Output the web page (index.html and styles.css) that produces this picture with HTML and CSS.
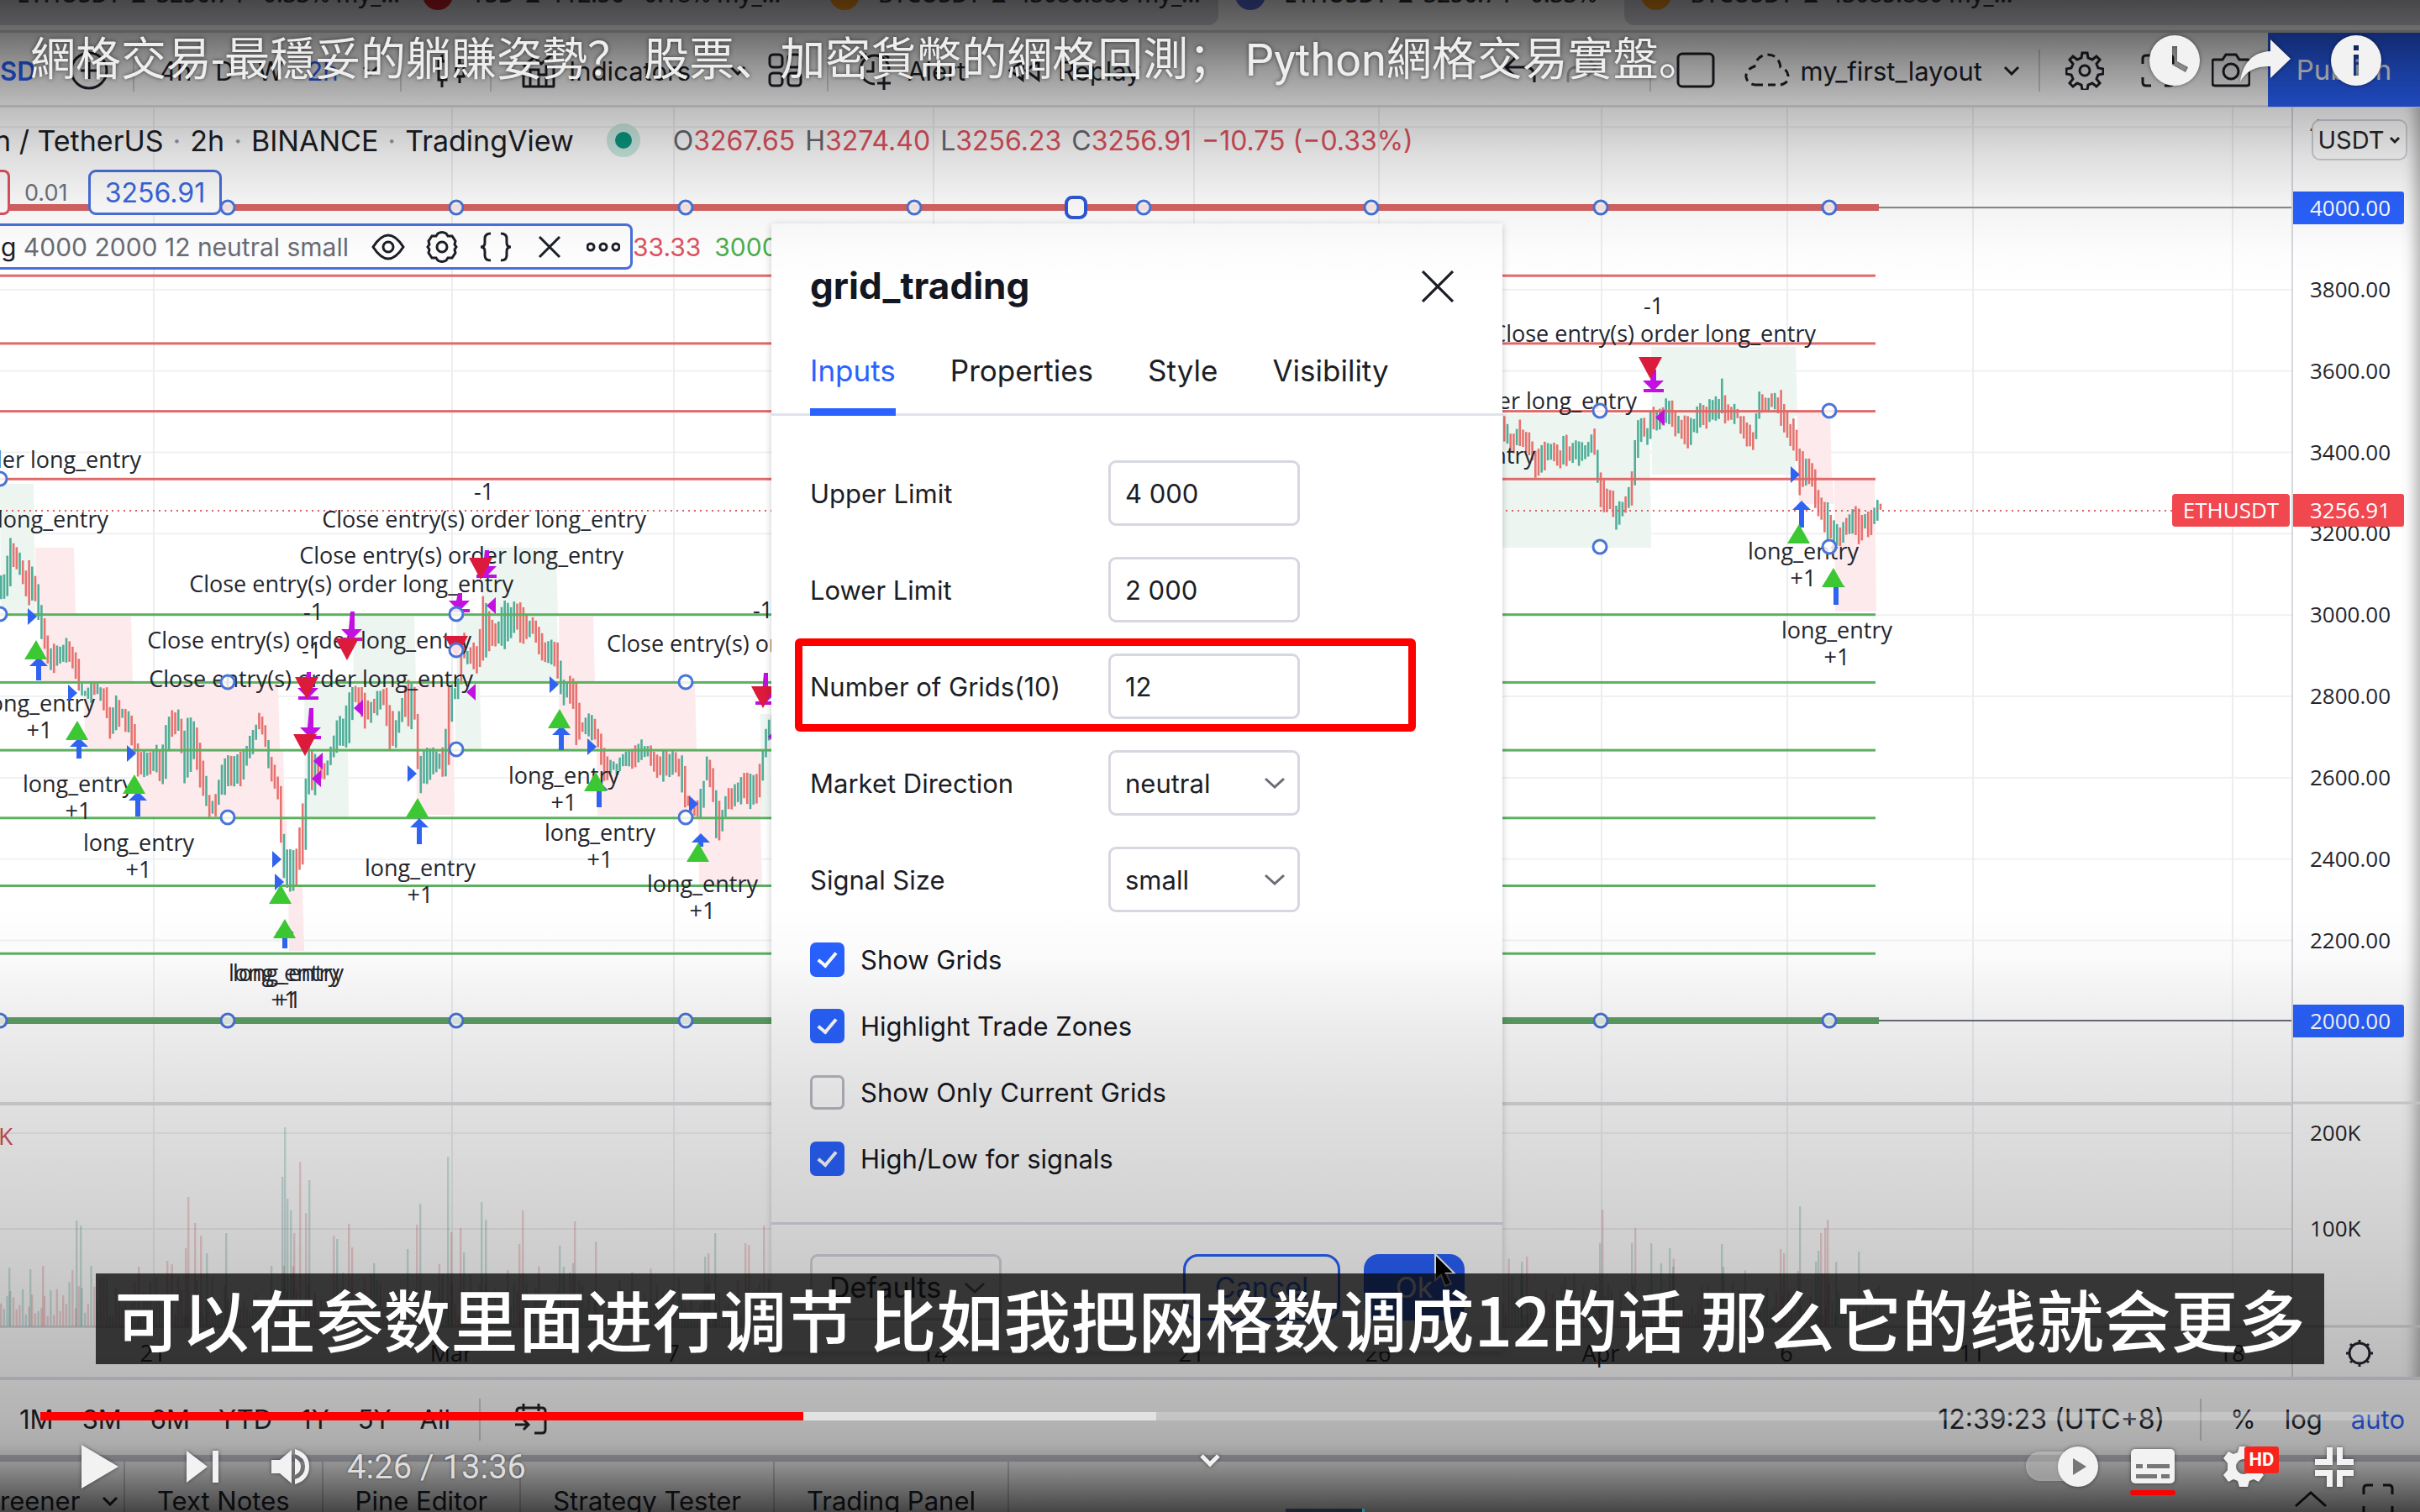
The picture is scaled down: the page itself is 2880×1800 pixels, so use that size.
FILE: index.html
```html
<!DOCTYPE html>
<html lang="zh-Hant">
<head>
<meta charset="utf-8">
<title>網格交易</title>
<link rel="stylesheet" href="styles.css">
</head>
<body>
<main class="player">
  <section class="app" lang="en">
    <div class="tabstrip">
      <div class="btab btab-dim"><span>ETHUSDT ▲ 3256.74 −0.33% my_…</span></div>
      <div class="btab btab-dim"><i class="fav red"></i><span>TSD ▲ 112.56 −0.18% my_…</span></div>
      <div class="btab btab-dim last"><i class="fav orange"></i><span>BTCUSDT ▲ 43086.880 my_…</span></div>
      <div class="btab"><i class="fav blue"></i><span>ETHUSDT ▲ 3256.74 −0.33%</span></div>
      <div class="btab btab-dim first"><i class="fav orange"></i><span>BTCUSDT ▲ 43085.880 my_…</span></div>
    </div>
    <header class="toolbar">
      <div class="tg g1"><b class="sym">SD</b><svg class="ic" viewBox="0 0 46 46"><circle cx="23" cy="23" r="21"/><path d="M23 13v20M13 23h20"/></svg></div>
      <div class="tg g2"><span>4h</span><span>D</span><span>W</span><span class="on">2h</span><svg class="chev" viewBox="0 0 20 12"><path d="M2 2l8 8 8-8"/></svg></div>
      <div class="tg g3"><svg class="ic" viewBox="0 0 46 46"><path d="M8 12h9v22H8zM12 4v8M12 34v9M29 16h9v14h-9zM33 8v8M33 30v8"/></svg></div>
      <div class="tg g4"><svg class="ic" viewBox="0 0 46 46"><path d="M4 42V28h8v14M12 42V22h10v20M22 42V28h9v14M31 42V18h9v24M3 42h38M4 18l13-11 8 8 14-12"/></svg><span>Indicators</span><svg class="chev" viewBox="0 0 20 12"><path d="M2 2l8 8 8-8"/></svg><svg class="ic lay" viewBox="0 0 46 46"><rect x="4" y="4" width="15" height="15" rx="4"/><rect x="26" y="4" width="15" height="15" rx="4"/><rect x="4" y="26" width="15" height="15" rx="4"/><rect x="26" y="26" width="15" height="15" rx="4"/></svg></div>
      <div class="tg g5"><svg class="ic" viewBox="0 0 46 46"><path d="M6 8l7-5M33 3l7 5M23 39a17 17 0 1 1 17-17M21 12v12h-8M34 30v16M26 38h16"/></svg><span>Alert</span><svg class="ic rep" viewBox="0 0 46 46"><path d="M20 12L5 23l15 11zM39 12L24 23l15 11z"/></svg><span>Replay</span></div>
      <div class="tg g6"><svg class="ic" viewBox="0 0 46 46"><path d="M16 8L5 19l11 11M5 19h24q10 0 10 12v6"/></svg><svg class="ic dim" viewBox="0 0 46 46"><path d="M30 8l11 11-11 11M41 19H17Q7 19 7 31v6"/></svg></div>
      <div class="tg g7"><svg class="ic" viewBox="0 0 46 46"><rect x="2" y="3" width="42" height="39" rx="5"/></svg><svg class="ic cloud" viewBox="0 0 56 46"><path stroke-dasharray="9 6" d="M14 40h30q10-2 9-11-1-8-9-10Q42 4 28 4 16 5 13 18 2 22 3 31q2 8 11 9z"/></svg><span>my_first_layout</span><svg class="chev" viewBox="0 0 20 12"><path d="M2 2l8 8 8-8"/></svg></div>
      <div class="tg g8"><svg class="ic" viewBox="0 0 46 46"><path d="M20 2h6l1 6 5 2 5-4 4 4-4 5 2 5 6 1v6l-6 1-2 5 4 5-4 4-5-4-5 2-1 6h-6l-1-6-5-2-5 4-4-4 4-5-2-5-6-1v-6l6-1 2-5-4-5 4-4 5 4 5-2z"/><circle cx="23" cy="23" r="6"/></svg><svg class="ic" viewBox="0 0 46 46"><path d="M5 15V9q0-4 4-4h6M31 5h6q4 0 4 4v6M41 31v6q0 4-4 4h-6M15 41H9q-4 0-4-4v-6"/></svg><svg class="ic" viewBox="0 0 46 46"><path d="M3 10h10l4-6h12l4 6h10q2 0 2 3v25q0 3-3 3H4q-3 0-3-3V12q0-2 2-2z"/><circle cx="23" cy="24" r="9"/></svg></div>
      <button class="publish">Publish</button>
    </header>
    <div class="workspace">
      <div class="pane">
        <svg id="chart" class="chart" role="img" aria-label="ETHUSDT chart"></svg>
        <div class="legend">
          <div class="l1"><span>n / TetherUS</span><i>·</i><span>2h</span><i>·</i><span>BINANCE</span><i>·</i><span>TradingView</span><em class="live"></em>
            <span class="ohlc"><span>O<b>3267.65</b></span><span>H<b>3274.40</b></span><span>L<b>3256.23</b></span><span>C<b>3256.91</b></span><b>−10.75 (−0.33%)</b></span></div>
          <div class="l2"><button class="sell"></button><span class="spread">0.01</span><button class="buy">3256.91</button></div>
          <div class="l3"><div class="study"><span>g <i>4000 2000 12 neutral small</i></span>
            <svg viewBox="0 0 40 40"><path d="M2 20q18-28 36 0-18 28-36 0z"/><circle cx="20" cy="20" r="6"/></svg>
            <svg viewBox="0 0 40 40"><path d="M15 4q5-3 10 0l2 3h5l4 6-1 4 2 3-2 3 1 4-4 6h-5l-2 3q-5 3-10 0l-2-3H8l-4-6 1-4-2-3 2-3-1-4 4-6h5z"/><circle cx="20" cy="20" r="6"/></svg>
            <svg viewBox="0 0 40 40"><path d="M14 4q-7 0-7 6v5q0 5-5 5 5 0 5 5v5q0 6 7 6M26 4q7 0 7 6v5q0 5 5 5-5 0-5 5v5q0 6-7 6"/></svg>
            <svg viewBox="0 0 40 40"><path d="M8 8l24 24M32 8L8 32"/></svg>
            <svg viewBox="0 0 40 40"><circle cx="5" cy="20" r="4"/><circle cx="20" cy="20" r="4"/><circle cx="35" cy="20" r="4"/></svg>
          </div><b class="r">33.33</b><b class="g">3000.00</b></div>
        </div>
      </div>
      <div class="scale"><svg id="scale" class="chart"></svg><button class="usdt">USDT<svg viewBox="0 0 14 10"><path d="M2 2l5 5 5-5"/></svg></button></div>
    </div>
    <div class="ranges">
      <a href="#">1M</a><a href="#">3M</a><a href="#">6M</a><a href="#">YTD</a><a href="#">1Y</a><a href="#">5Y</a><a href="#">All</a><s></s>
      <svg class="cal" viewBox="0 0 40 40"><path d="M3 16V10q0-4 4-4h26q4 0 4 4v22q0 4-4 4h-9M3 14h34M11 1v9M29 1v9M1 26h16M11 20l6 6-6 6"/></svg>
      <span class="clock">12:39:23 (UTC+8)</span><s></s><a href="#" class="pct">%</a><a href="#">log</a><a href="#" class="on">auto</a>
    </div>
    <nav class="bottabs">
      <a href="#">reener <svg class="chev" viewBox="0 0 20 12"><path d="M2 2l8 8 8-8"/></svg></a><a href="#">Text Notes</a><a href="#">Pine Editor</a><a href="#">Strategy Tester</a><a href="#">Trading Panel</a>
      <span class="endicons"><svg viewBox="0 0 40 40"><path d="M2 28l18-16 18 16"/></svg><svg viewBox="0 0 40 40"><path d="M3 14V7q0-4 4-4h7M26 3h7q4 0 4 4v7M37 28v7M3 28v7"/></svg></span>
    </nav>
  </section>

  <form class="dialog" lang="en">
    <div class="dhead"><h1>grid_trading</h1><button type="button" class="x" aria-label="Close"><svg viewBox="0 0 36 36"><path d="M1 1l34 34M35 1L1 35"/></svg></button></div>
    <nav class="dtabs"><a href="#" class="on">Inputs</a><a href="#">Properties</a><a href="#">Style</a><a href="#">Visibility</a></nav>
    <div class="fields">
      <label for="u">Upper Limit</label><input id="u" value="4 000">
      <label for="l">Lower Limit</label><input id="l" value="2 000">
      <label for="n">Number of Grids(10)</label><input id="n" value="12">
      <label for="m">Market Direction</label><div class="sel"><select id="m"><option>neutral</option></select><svg viewBox="0 0 26 16"><path d="M2 3l11 10L24 3"/></svg></div>
      <label for="s">Signal Size</label><div class="sel"><select id="s"><option>small</option></select><svg viewBox="0 0 26 16"><path d="M2 3l11 10L24 3"/></svg></div>
    </div>
    <div class="checks">
      <label><input type="checkbox" checked>Show Grids</label>
      <label><input type="checkbox" checked>Highlight Trade Zones</label>
      <label><input type="checkbox">Show Only Current Grids</label>
      <label><input type="checkbox" checked>High/Low for signals</label>
    </div>
    <div class="dfoot"><button type="button" class="def">Defaults<svg viewBox="0 0 26 16"><path d="M2 3l11 10L24 3"/></svg></button><button type="button" class="cancel">Cancel</button><button type="button" class="ok">Ok</button></div>
    <div class="mark"></div>
    <svg class="cursor" viewBox="0 0 28 42"><path d="M2 1v31l7-6 5 13 7-3-6-12h10z"/></svg>
  </form>

  <div class="shade"></div>
  <div class="thumb"></div>

  <div class="ptitle"><h2 lang="zh-Hans">網格交易-最穩妥的躺賺姿勢？ 股票、加密貨幣的網格回測； Python網格交易實盤。</h2>
    <div class="picons">
      <button aria-label="Watch later"><svg viewBox="0 0 66 66"><path fill-rule="evenodd" d="M33 3a30 30 0 1 0 0 60 30 30 0 1 0 0-60zm-3 13h6v18l13 7-3 6-16-9z"/></svg></button>
      <button aria-label="Share"><svg viewBox="0 0 66 66"><path d="M39 8v14C17 23 6 37 3 58c9-14 19-18 36-18v14l24-23z"/></svg></button>
      <button aria-label="Info"><svg viewBox="0 0 66 66"><path fill-rule="evenodd" d="M33 3a30 30 0 1 0 0 60 30 30 0 1 0 0-60zm-3 12h6v6h-6zm0 11h6v25h-6z"/></svg></button>
    </div>
  </div>

  <div class="controls">
    <p class="caption" lang="zh-Hans">可以在参数里面进行调节 比如我把网格数调成12的话 那么它的线就会更多</p>
    <div class="progress"><div class="loaded"></div><div class="played"></div></div>
    <div class="bar">
      <div class="left">
        <button aria-label="Play"><svg viewBox="0 0 72 72"><path d="M15 10l44 26-44 26z"/></svg></button>
        <button aria-label="Next"><svg viewBox="0 0 72 72"><path d="M17 17l25 19-25 19zM48 17h7v38h-7z"/></svg></button>
        <button aria-label="Mute"><svg viewBox="0 0 72 72"><path d="M14 28v16h10l14 12V16L24 28zM42 26v20q7-3 7-10t-7-10zM42 15v6q12 4 12 15T42 51v6q17-5 17-21T42 15z"/></svg></button>
        <span class="time">4:26 / 13:36</span>
      </div>
      <svg class="more" viewBox="0 0 26 18"><path d="M3 3l10 10L23 3"/></svg>
      <div class="right">
        <button aria-label="Autoplay"><svg class="wide" viewBox="0 0 90 72"><rect x="3" y="18" width="70" height="35" rx="17" opacity=".4"/><circle cx="65" cy="36" r="24"/><path d="M59 26l16 10-16 10z" class="hole"/></svg></button>
        <button aria-label="Captions" class="cc"><svg viewBox="0 0 72 72"><rect x="10" y="15" width="52" height="41" rx="5"/><path class="hole" d="M16 33h8v5h-8zM29 33h27v5H29zM16 45h25v5H16zM46 45h10v5H46z"/></svg></button>
        <button aria-label="Settings" class="set"><svg viewBox="0 0 72 72"><path fill-rule="evenodd" d="M31 12h10l2 7 5 2 6-3 6 8-5 6v8l5 6-6 8-6-3-5 2-2 7H31l-2-7-5-2-6 3-6-8 5-6v-8l-5-6 6-8 6 3 5-2zm5 15a9 9 0 1 0 0 18 9 9 0 1 0 0-18z"/></svg><span>HD</span></button>
        <button aria-label="Exit full screen"><svg viewBox="0 0 72 72"><path d="M27 13h7v21H13v-7h14zM39 13h7v14h13v7H39zM13 40h21v20h-7V47H13zM39 40h20v7H46v13h-7z"/></svg></button>
      </div>
    </div>
  </div>
</main>
<script src="chart.js"></script>
</body>
</html>
```
FILE: styles.css
```css
*{box-sizing:border-box}
body{margin:0;font-family:Inter,"Liberation Sans",sans-serif;color:#1c1e26;background:#fff}
button{font:inherit;color:inherit;border:0;background:none;padding:0}
a{color:inherit;text-decoration:none}
h1,h2,p{margin:0}
svg{fill:none;stroke:currentColor;stroke-width:3;display:block;flex:none}
.player{position:relative;height:100vh;min-height:1680px;overflow:hidden}
.app{display:flex;flex-direction:column;height:100%}

.tabstrip{height:39px;flex:none;display:flex;background:#fff;border-bottom:3px solid #d5d5d5;overflow:hidden}
.btab{flex:1;height:30px;display:flex;gap:22px;font:500 28px/30px "Noto Sans",sans-serif;padding-left:20px;white-space:nowrap;overflow:hidden;color:#333}
.btab-dim{background:#d8d8e0}
.btab span{margin-top:-23px}
.btab.last{border-radius:0 0 12px 0}
.btab.first{border-radius:0 0 0 12px;flex:2}
.fav{width:36px;height:36px;border-radius:50%;margin-top:-24px;flex:none}
.fav.red{background:#c81e28}.fav.orange{background:#f7931a}.fav.blue{background:#5a6ee0}

.toolbar{height:89px;flex:none;display:flex;align-items:center;font-size:31px;color:#20222a;border-bottom:3px solid #e0e3eb;padding-top:4px}
.tg{display:flex;align-items:center;height:50px;border-right:2px solid #d4d6de}
.ic{width:46px;height:46px}
.chev{width:20px;height:12px}
.dim{opacity:.35}
.on{color:#2962ff}
.sym{color:#2962ff;font-weight:600;margin-right:40px}
.g1{width:160px}
.g2{width:318px;padding-left:30px;gap:28px}
.g3{width:107px;padding-left:36px}
.g4{width:401px;padding-left:34px;gap:12px}
.g4 .chev{margin-left:34px}
.lay{margin-left:12px}
.g5{border:0;padding-left:32px;gap:16px}
.rep{margin-left:32px}
.g6{margin-left:auto;padding-right:58px;gap:26px}
.g7{padding-left:30px;gap:12px}
.g7 .cloud{width:56px;margin-left:22px}
.g7 .chev{margin:0 22px 0 13px}
.g8{border:0;padding:0 21px 0 30px;gap:41px}
.publish{width:181px;height:88px;margin-top:-4px;background:#2962ff;color:#fff;font-size:33px;align-self:flex-start}

.workspace{flex:1;display:grid;grid-template-columns:1fr 153px;min-height:0;border-bottom:4px solid #e0e3eb}
.pane,.scale{position:relative;overflow:hidden}
.scale{border-left:2px solid #d6d8e0;box-shadow:inset -20px 0 16px -14px rgba(0,0,0,.3)}
.chart{position:absolute;inset:0;width:100%;height:100%}
.chart text{stroke:none;fill:#24262e;font:26px "Open Sans",sans-serif}
.chart .order{font-size:27px}
.usdt{position:absolute;left:22px;top:14px;width:114px;height:49px;border:2px solid #d0d2da;border-radius:10px;background:#fff;font-size:29px;display:flex;align-items:center;justify-content:center;gap:6px;color:#24262e}
.usdt svg{width:14px;height:10px}

.legend{position:relative;display:flex;flex-direction:column}
.legend b,.legend i,.legend em{font-weight:400;font-style:normal}
.l1{height:74px;display:flex;align-items:center;font-size:34px;white-space:nowrap;gap:11px;padding-top:4px;margin-left:-7px}
.l1 i{color:#9a9ca4}
.live{width:40px;height:40px;border-radius:50%;border:10px solid #cdebe3;background:#089981;margin:0 28px}
.ohlc{font-size:32px;color:#666872;display:flex;gap:12px}
.ohlc b{color:#e0525e}
.l2{height:54px;display:flex;align-items:center;gap:17px}
.sell{width:12px;height:54px;border:3px solid #e0525e;border-left:0;border-radius:0 8px 8px 0;background:#fff}
.spread{font-size:27px;color:#72747e;width:59px}
.buy{width:159px;height:54px;border:3px solid #4a70dc;border-radius:9px;background:#fff;color:#3a66e0;font-size:32px}
.l3{display:flex;align-items:center;margin-top:10px;font-size:30px}
.study{display:flex;align-items:center;width:753px;height:55px;border:3px solid #4a70dc;border-left:0;border-radius:0 8px 8px 0;background:#fff;gap:24px;padding-left:1px}
.study svg{width:40px;height:40px;stroke-width:3}
.study span{width:417px;white-space:nowrap}
.study i{color:#6a6c76}
.r{color:#e0525e}.g{color:#4caf50;margin-left:16px}

.ranges{flex:none;display:flex;align-items:center;gap:34px;padding:4px 18px 0 23px;font-size:31px;color:#22242c;border-bottom:8px solid #c9c9d4;height:97px}
.ranges s{width:2px;height:50px;background:#d0d2da}
.cal{width:40px;height:40px;margin-left:6px}
.clock{margin:0 8px 0 auto;font-size:32px}
.bottabs{height:60px;flex:none;display:flex;font-size:31px;line-height:44px;color:#20222a;overflow:hidden}
.bottabs a{padding:25px 38px 0;border-right:2px solid #d0d2da;display:flex;gap:26px;white-space:nowrap}
.bottabs a:first-child{padding:25px 14px 0 0;width:149px}
.bottabs .chev{margin-top:16px}
.endicons{margin-left:auto;display:flex;gap:40px;padding:25px 30px 0 0}
.endicons svg{width:40px;height:40px}

.dialog{position:absolute;left:50%;top:266px;width:870px;margin-left:-522px;height:1343px;background:#fff;box-shadow:0 2px 8px rgba(0,0,0,.22);color:#1c1e26}
.dhead{display:flex;justify-content:space-between;align-items:center;height:150px;padding:0 58px 0 46px}
h1{font-size:44px;line-height:52px;padding-bottom:2px;font-weight:700;color:#131722}
.x svg{width:38px;height:38px}
.dtabs{display:flex;gap:65px;padding-left:46px;border-bottom:3px solid #e0e3eb;font-size:35px;line-height:50px}
.dtabs a{height:79px;margin-bottom:-3px}
.dtabs .on{border-bottom:9px solid #2962ff}
.fields{display:grid;grid-template-columns:355px 228px;row-gap:37px;align-items:center;padding:53px 46px 0;font-size:31px}
.fields input,.fields select{font:31px Inter,sans-serif;color:#1c1e26;width:228px;height:78px;border:3px solid #d6d8e0;border-radius:9px;background:#fff;padding:0 17px;appearance:none;display:block}
.sel{display:grid}
.sel>*{grid-area:1/1}
.sel svg,.def svg{width:26px;height:16px;color:#6a6c76}
.sel svg{place-self:center end;margin-right:17px;pointer-events:none}
.checks{display:flex;flex-direction:column;gap:38px;padding:36px 46px 55px;font-size:31px;color:#17181e}
.checks label{display:flex;align-items:center;gap:19px;height:41px}
.checks input{appearance:none;width:41px;height:41px;margin:0;border:3px solid #b8bac2;border-radius:7px;display:grid;place-items:center}
.checks input:checked{background:#2962ff;border-color:#2962ff}
.checks input:checked::after{content:"";width:9px;height:18px;border:solid #fff;border-width:0 4px 4px 0;rotate:40deg;margin-top:-5px}
.dfoot{display:flex;gap:28px;border-top:3px solid #dcdce6;padding:35px 45px 0 46px;font-size:34px}
.dfoot button{height:79px;border-radius:18px}
.dfoot .def{width:228px;border:3px solid #d6d8e0;border-radius:9px;display:flex;align-items:center;justify-content:space-between;padding:0 16px 0 20px;margin-right:auto}
.dfoot .cancel{width:187px;border:3px solid #2962ff;color:#2962ff}
.dfoot .ok{width:120px;background:#2962ff;color:#fff}
.mark{position:absolute;left:28px;top:494px;width:739px;height:111px;border:9px solid #f00;border-radius:6px}
.cursor{position:absolute;right:54px;top:1226px;width:28px;height:42px;fill:#000;stroke:#fff;stroke-width:2}

.shade{position:absolute;inset:0;pointer-events:none;background:
 linear-gradient(rgba(0,0,0,.67) 0,rgba(0,0,0,.57) 38px,rgba(0,0,0,.40) 82px,rgba(0,0,0,.26) 127px,rgba(0,0,0,.13) 185px,rgba(0,0,0,.05) 240px,rgba(0,0,0,.01) 300px,transparent 340px),
 linear-gradient(to top,rgba(0,0,0,.73) 0,rgba(0,0,0,.44) 56px,rgba(0,0,0,.33) 80px,rgba(0,0,0,.295) 110px,rgba(0,0,0,.27) 160px,rgba(0,0,0,.24) 221px,rgba(0,0,0,.19) 320px,rgba(0,0,0,.12) 487px,rgba(0,0,0,.07) 585px,rgba(0,0,0,.02) 660px,transparent 720px)}
.thumb{position:absolute;left:50%;bottom:0;margin-left:90px;width:94px;height:4px;background:#1c2430;border-right:3px solid #1c8a94}

.ptitle{position:absolute;inset:0 0 auto;display:flex;justify-content:space-between;align-items:flex-start;padding:32px 43px 0 36px;color:#eee}
h2{font:400 54px/80px Roboto,"Noto Sans CJK SC",sans-serif;text-shadow:0 0 5px rgba(0,0,0,.6);white-space:nowrap}
.picons{display:flex;gap:42px;padding-top:7px}
.picons svg,.bar button svg,.more{fill:#f2f2f2;stroke:none;filter:drop-shadow(0 0 2px rgba(0,0,0,.5))}
.picons svg{width:66px;height:66px}
.controls{position:absolute;inset:auto 0 0;display:flex;flex-direction:column}
.caption{align-self:center;background:rgba(8,8,8,.76);color:#fff;font:500 80px/104px "Noto Sans CJK SC",sans-serif;padding:0 22px 4px;white-space:nowrap;margin-bottom:57px}
.progress{height:10px;margin:0 48px;background:rgba(255,255,255,.22);display:grid}
.progress div{grid-area:1/1}
.loaded{width:47.7%;background:rgba(255,255,255,.5)}
.played{width:32.6%;background:#f00}
.bar{height:109px;display:grid;grid-template-columns:1fr auto 1fr;align-items:start;padding:19px 66px 0 82px}
.bar button{position:relative}
.bar button svg{width:72px;height:72px}
.left{display:flex;align-items:center}
.left button+button{margin-left:51px}
.left button+button+button{margin-left:32px}
.time{font:40px Roboto,sans-serif;color:#ddd;margin-left:32px;text-shadow:0 0 3px rgba(0,0,0,.5)}
.bar .more{width:26px;height:18px;margin:20px 16px 0 0;stroke:#f2f2f2;stroke-width:5;fill:none}
.right{display:flex;justify-content:flex-end;gap:36px}
.bar .right .wide{width:90px}
.right button:first-child{margin-right:-8px}
.hole{fill:#777}
.cc::after{content:"";position:absolute;left:9px;right:9px;top:64px;height:6px;border-radius:3px;background:#f00}
.set span{position:absolute;left:37px;top:12px;width:41px;height:32px;border-radius:3px;background:#f8241c;color:#fff;font:700 22px/32px Roboto,sans-serif}
```
FILE: chart.js
```js
const NS = "http://www.w3.org/2000/svg", TOP = 128;
const svg = document.getElementById("chart"), scale = document.getElementById("scale");
const root = document.createElementNS(NS, "g");
root.setAttribute("transform", `translate(0,-${TOP})`);
svg.append(root);
function add(tag, attrs, text, parent) {
  const e = document.createElementNS(NS, tag);
  for (const k in attrs) e.setAttribute(k, attrs[k]);
  if (text) e.textContent = text;
  (parent || root).append(e);
  return e;
}
let seed = 7;
const rnd = () => (seed = (seed * 16807) % 2147483647) / 2147483647;
const GREEN = "#50ae98", RED = "#e6736f";
const box = (x, y, w, h, fill, extra) => add("rect", { x, y, width: w, height: h, fill, stroke: "none", ...extra });
const priceY = p => 247 + (4000 - p) * 0.4842;

// background grid
for (let p = 4200; p > 2000; p -= 200) box(0, priceY(p), "100%", 2, "#f0f1f3");
for (const y of [1348, 1462]) box(0, y, "100%", 2, "rgba(0,0,0,.06)");
for (const x of [182, 537, 801, 1110, 1420, 1640, 1905, 2126, 2347, 2656]) box(x, TOP, 2, 1451, "#eceef1");
box(0, 1312, "100%", 4, "#dcdde2");
box(0, 1578, "100%", 3, "#dcdde2");

// trade zones: x1, y1, x2, y2
const P = "#fdeaec", G = "#ecf5f0";
[[0,576,42,731,G],[42,652,90,731,P],[48,734,158,812,P],[100,812,333,892,P],[165,892,339,972,P],[343,1054,362,1132,P],
 [334,972,343,1054,P],[362,812,415,972,G],[413,812,495,892,G],[420,734,495,812,G],[495,812,541,970,P],[541,812,573,892,G],
 [543,734,665,812,G],[573,652,664,734,G],[665,734,708,812,P],[665,812,829,892,P],[710,892,907,971,P],[831,971,907,1054,P],[905,850,918,971,G],
 [1787,493,1965,652,G],[1965,493,2137,565,G],[1965,413,2139,495,G],[2139,491,2180,570,P],[2183,570,2233,728,P],[2140,570,2183,600,P]]
  .forEach(([a, b, c, d, f]) => add("path", { d: `M${a} ${b}H${c - 2}L${c} ${d}H${a + 1}Z`, fill: f, stroke: "none" }));

// candles: x, high, low control points
const left = [0,692,706,5,688,708,10,642,700,14,646,675,20,655,672,25,665,694,30,680,706,34,667,715,40,690,712,43,690,730,50,735,765,54,752,780,58,772,800,65,770,795,72,776,786,80,760,780,86,775,795,91,777,815,96,818,826,103,826,830,110,814,828,118,818,826,125,820,850,130,852,878,138,830,860,144,847,856,151,845,870,158,860,890,163,893,920,170,900,918,178,895,915,184,890,910,190,900,935,197,860,920,202,850,870,212,850,865,218,870,930,223,855,925,230,860,900,236,885,930,243,925,950,250,955,972,257,945,965,265,905,940,275,905,932,285,900,930,292,895,912,298,875,900,307,853,870,314,860,880,320,895,920,330,930,950,334,940,1015,338,1018,1050,344,1010,1060,350,1020,1050,357,980,1030,363,925,1005,367,885,925,372,900,950,380,905,925,387,910,930,393,890,910,400,855,890,405,860,880,410,850,890,415,820,880,420,818,835,425,820,840,432,825,862,440,840,855,448,825,845,455,820,832,460,820,875,464,850,890,472,860,880,480,820,850,486,815,870,492,820,850,495,840,900,499,900,940,505,890,930,513,895,925,520,900,915,528,895,920,532,820,915,538,822,830,543,820,830,547,790,815,550,750,780,555,780,784,562,765,790,568,770,800,573,715,780,579,720,780,585,745,770,592,740,760,598,716,770,606,725,755,614,718,745,620,720,770,626,740,758,632,738,750,640,750,780,650,770,790,658,765,785,664,765,810,668,812,832,675,810,832,680,808,830,684,812,882,692,860,870,700,850,872,706,855,875,712,875,890,718,890,930,725,910,920,733,910,916,742,900,910,752,893,908,760,886,905,770,890,900,778,898,915,785,900,925,792,898,920,800,900,918,808,905,920,813,905,955,818,950,960,830,955,975,836,930,960,840,903,925,846,910,935,850,940,1000,857,970,990,864,940,965,870,945,965,876,935,955,884,920,950,892,925,960,900,920,950,905,910,935,909,870,910,914,860,875,918,852,870];
const right = [1789,500,520,1797,525,530,1802,515,535,1807,502,525,1811,515,533,1817,520,540,1822,525,540,1826,540,565,1831,540,568,1838,530,550,1847,530,545,1855,540,560,1862,516,550,1868,535,550,1876,528,548,1885,530,542,1892,522,536,1897,515,540,1903,560,600,1909,582,603,1917,585,605,1922,605,628,1930,600,615,1936,585,600,1942,555,600,1946,510,560,1952,500,520,1960,510,523,1964,480,515,1969,492,510,1977,487,505,1986,475,505,1992,490,515,2000,500,520,2008,500,530,2014,500,515,2021,485,505,2029,485,503,2038,478,500,2045,475,497,2049,450,490,2053,480,503,2060,485,500,2066,485,498,2072,500,515,2079,505,530,2084,520,535,2089,490,515,2093,467,490,2100,475,486,2108,472,485,2116,475,487,2119,463,505,2124,495,518,2130,505,528,2136,505,540,2140,535,590,2148,550,570,2155,555,570,2159,560,600,2163,585,610,2168,600,625,2174,605,635,2180,620,640,2187,632,647,2194,620,637,2200,618,630,2206,602,635,2211,612,650,2217,618,630,2223,615,633,2229,605,625,2233,598,612,2237,600,607];
for (const s of [left, right]) {
  let i = 0;
  for (let x = s[0]; x < s[s.length - 3]; x += 3.7) {
    while (s[i + 3] < x) i += 3;
    const t = (x - s[i]) / (s[i + 3] - s[i]);
    const hi = s[i + 1] + (s[i + 4] - s[i + 1]) * t, lo = s[i + 2] + (s[i + 5] - s[i + 2]) * t;
    const falling = s[i + 4] + s[i + 5] > s[i + 1] + s[i + 2];
    const y = hi + rnd() * 8 - 7;
    box(x, y, 2.6, Math.max(6, lo - y + rnd() * 10 - 2), rnd() < .78 ? (falling ? RED : GREEN) : (falling ? GREEN : RED));
  }
}

// volume
const vols = {10:1509,35:1511,50:1507,90:1453,95:1459,164:1508,198:1501,223:1425,220:1486,231:1456,238:1471,245:1492,268:1468,335:1401,338:1342,341:1427,345:1441,349:1468,356:1383,363:1444,367:1405,396:1471,400:1475,414:1457,418:1485,484:1487,495:1458,499:1433,532:1377,536:1467,547:1462,551:1491,572:1431,577:1452,617:1481,621:1441,665:1483,683:1454,708:1478,838:1496,842:1492,850:1468,886:1480,890:1482,908:1459,
 1810:1502,1816:1496,1903:1480,1906:1440,1941:1480,1945:1462,1964:1480,1986:1486,1990:1508,2048:1481,2118:1487,2122:1492,2141:1436,2160:1502,2163:1489,2166:1468,2171:1462,2174:1452,2184:1502,2211:1490};
const volBar = (x, y) => box(x, y, 2.4, 1579 - y, rnd() < .5 ? "rgba(200,60,70,.22)" : "rgba(40,140,120,.24)");
for (let x = 0; x < 2236; x += 3.7) {
  if (x > 918 && x < 1787) continue;
  volBar(x, 1579 - 12 - rnd() * rnd() * 75);
}
for (const x in vols) volBar(+x, vols[x]);
add("text", { x: -2, y: 1363, style: "fill:#d0505c;font-size:28px" }, "K");

// grid levels
for (let i = 1; i < 12; i++) {
  if (i === 5) continue;
  box(0, 246 + i * 80.7, 2232, 3, i < 5 ? "#e06a6a" : "#5cb060");
}
box(0, 243, 2236, 8, "#d66464");
box(0, 1211, 2236, 8, "#5f9f66");
for (const y of [246, 1214]) box(2236, y, "100%", 2, y < 900 ? "#8a8c92" : "#6a6e80");
add("line", { x1: 0, x2: 2585, y1: 608, y2: 608, stroke: "#d8606a", "stroke-width": 2, "stroke-dasharray": "2 5" });

// order labels
const long = "long_entry", close = "Close entry(s) order long_entry";
const txt = (s, x, y, anchor) => add("text", { x, y, class: "order", "text-anchor": anchor || "middle" }, s);
[[168,557],[129,628],[769,628],[742,671],[611,705],[561,772],[563,818],[2161,407],[1948,487],[1827,552]].forEach(([x, y]) => txt(close, x, y, "end"));
txt(close, 722, 776, "start");
[[576,595],[373,738],[371,784],[908,736],[1968,374]].forEach(([x, y]) => txt("-1", x, y));
[[47,847],[93,943],[165,1013],[500,1043],[671,933],[714,1001],[836,1062],[338,1168],[343,1168],[2146,666],[2186,760]].forEach(([x, y]) => {
  txt(long, x, y);
  txt("+1", x, y + 32);
});

// order markers
const shape = (d, fill) => add("path", { d, fill, stroke: "none" });
const BLUE = "#2f63f0", PURPLE = "#c210e0";
[[46,782,810],[94,878,903],[164,942,972],[339,1100,1129],[499,974,1005],[668,864,893],[713,930,961],[834,992,1008],[2144,596,628],[2185,688,720]]
  .forEach(([x, a, b]) => shape(`M${x} ${a}l11 11h-8V${b}h-6V${a + 11}h-8z`, BLUE));
[[43,762],[92,858],[160,922],[334,1053],[339,1094],[497,950],[666,844],[709,919],[831,1003],[2141,624],[2182,676]]
  .forEach(([x, y]) => shape(`M${x} ${y}l13 23h-27z`, "#3cc832"));
[[33,734],[81,825],[151,897],[324,1023],[327,1050],[485,921],[654,815],[699,889],[820,957],[2131,565]]
  .forEach(([x, y]) => shape(`M${x} ${y - 10}l11 10-11 10z`, BLUE));
[[419,728,762],[370,843,879],[367,800,832],[547,706,728],[579,655,687],[911,801,838],[1968,440,466]]
  .forEach(([x, a, b]) => shape(`M${x - 2} ${a}h5V${b - 13}h9l-10 10h10v4h-24v-4h9l-10-10h9z`, PURPLE));
[[413,760],[365,806],[363,874],[572,664],[543,757],[908,817],[1964,425]]
  .forEach(([x, y]) => shape(`M${x} ${y + 26}l-14-26h28z`, "#dc1a3c"));
[[421,843],[373,906],[371,927],[579,721],[555,824],[914,877],[1970,497]]
  .forEach(([x, y]) => shape(`M${x} ${y}l11-10v20z`, PURPLE));

// anchors
const ring = (cx, cy) => add("circle", { cx, cy, r: 8, fill: "#fff", "fill-opacity": .85, stroke: "#4a74d8", "stroke-width": 3 });
[271,543,816,1088,1361,1632,1905,2177].forEach(x => ring(x, 247));
[0,271,543,816,1905,2177].forEach(x => ring(x, 1215));
[[0,570],[0,731],[271,812],[271,973],[543,731],[543,774],[543,892],[816,812],[816,973],[1904,489],[1904,651],[2177,489],[2177,651]].forEach(([x, y]) => ring(x, y));
add("rect", { x: 1269, y: 235, width: 23, height: 24, rx: 7, fill: "#fff", stroke: "#2f58d8", "stroke-width": 4 });

// time axis
[["21",182],["Mar",537],["7",801],["14",1112],["21",1418],["26",1640],["Apr",1905],["6",2126],["11",2347],["18",2656]]
  .forEach(([s, x]) => txt(s, x, 1621));

// symbol tag sticks to the right edge of the pane
const tag = add("svg", { x: "100%", y: 588, width: 1, height: 40, overflow: "visible" });
add("rect", { x: -142, y: 0, width: 140, height: 39, rx: 4, fill: "#f0484e", stroke: "none" }, "", tag);
add("text", { x: -72, y: 29, "text-anchor": "middle", style: "fill:#fff" }, "ETHUSDT", tag);

// price scale
const g = add("g", { transform: `translate(0,-${TOP})` }, "", scale);
add("text", { x: 20, y: 160 }, "4200.00", g);
for (let p = 3800; p > 2000; p -= 200) add("text", { x: 20, y: priceY(p) + 10 }, p + ".00", g);
for (const [y, s, f] of [[228, "4000.00", "#2962ff"], [1196, "2000.00", "#2962ff"], [588, "3256.91", "#f0484e"]]) {
  add("rect", { x: -4, y, width: 136, height: 39, rx: 3, fill: f, stroke: "none" }, "", g);
  add("text", { x: 20, y: y + 29, style: "fill:#fff" }, s, g);
}
add("text", { x: 20, y: 1358 }, "200K", g);
add("text", { x: 20, y: 1472 }, "100K", g);
add("path", { d: "M0 1313h153M0 1579h153", stroke: "#dcdde2" }, "", g);
add("path", { d: "M67 1611a12 12 0 1 0 24 0 12 12 0 1 0-24 0M79 1595v4M79 1623v4M63 1611h4M91 1611h4M68 1600l3 3M87 1619l3 3M90 1600l-3 3M71 1619l-3 3", stroke: "#24262e" }, "", g);
```
